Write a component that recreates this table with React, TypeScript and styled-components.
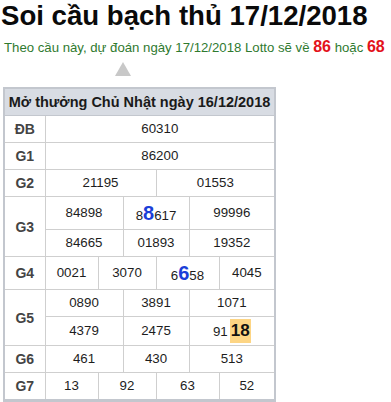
import React from "react";
import styled, { createGlobalStyle } from "styled-components";

const GlobalStyle = createGlobalStyle`
  body {
    margin: 0;
    background: #fff;
    font-family: "Liberation Sans", Arial, sans-serif;
  }
`;

const Page = styled.div`
  width: 391px;
  height: 402px;
  overflow: hidden;
`;

const Title = styled.h1`
  margin: 0;
  padding-left: 1px;
  font-size: 27.6px;
  font-weight: bold;
  color: #0a0a0a;
  line-height: 31px;
`;

const Lead = styled.p`
  margin: 6px 0 0;
  padding-left: 4px;
  font-size: 13.2px;
  color: #2f7a2f;
  line-height: 19px;
`;

const Lucky = styled.b`
  color: #e3121b;
  font-size: 16px;
`;

const Arrow = styled.div`
  width: 0;
  height: 0;
  margin: 5px 0 0 115px;
  border-left: 8px solid transparent;
  border-right: 8px solid transparent;
  border-bottom: 14px solid #c8c8c8;
`;

const Board = styled.table`
  margin: 11px 0 0 3px;
  width: 271px;
  table-layout: fixed;
  border-collapse: collapse;
  border: 2px solid #c3c7ce;
  border-bottom-width: 3px;
  font-size: 13.3px;
  color: #1d1d1d;
`;

const Col = styled.col<{ $w: number }>`
  width: ${(p) => p.$w}px;
`;

const Head = styled.th`
  background: #d8dce3;
  border: 1px solid #c3c7ce;
  height: 26px;
  padding: 0;
  font-size: 14.5px;
  font-weight: bold;
  color: #1a1a1a;
  line-height: 16px;
  white-space: nowrap;
`;

const Label = styled.td`
  border: 1px solid #cfcfcf;
  height: 26px;
  padding: 0;
  text-align: center;
  font-size: 14px;
  font-weight: bold;
  color: #444;
  line-height: 16px;
`;

const Cell = styled.td`
  border: 1px solid #cfcfcf;
  height: 26px;
  padding: 0;
  text-align: center;
  line-height: 16px;
`;

const Hit = styled.b`
  display: inline-block;
  color: #1b3fd8;
  font-size: 20px;
  line-height: 32px;
`;

const Mark = styled.b`
  display: inline-block;
  margin: 2px 0 2px 2px;
  padding: 2px 1px;
  background: #fdd584;
  color: #111;
  font-size: 17px;
  line-height: 20px;
`;

const spans: Record<number, number[]> = {
  1: [6],
  2: [3, 3],
  3: [2, 2, 2],
  4: [1, 2, 2, 1],
};

const widths = [41, 53, 25, 33, 33, 30, 56];

type Value = React.ReactNode;

const NumRow = ({ label, values, rows }: { label?: string; values: Value[]; rows?: number }) => (
  <tr>
    {label && <Label rowSpan={rows}>{label}</Label>}
    {values.map((v, i) => (
      <Cell key={i} colSpan={spans[values.length][i]}>
        {v}
      </Cell>
    ))}
  </tr>
);

export default function App() {
  return (
    <Page>
      <GlobalStyle />
      <Title>Soi cầu bạch thủ 17/12/2018</Title>
      <Lead>
        Theo cầu này, dự đoán ngày 17/12/2018 Lotto sẽ về <Lucky>86</Lucky> hoặc{" "}
        <Lucky>68</Lucky>
      </Lead>
      <Arrow />
      <Board>
        <colgroup>
          {widths.map((w, i) => (
            <Col key={i} $w={w} />
          ))}
        </colgroup>
        <thead>
          <tr>
            <Head colSpan={7}>Mở thưởng Chủ Nhật ngày 16/12/2018</Head>
          </tr>
        </thead>
        <tbody>
          <NumRow label="ĐB" values={["60310"]} />
          <NumRow label="G1" values={["86200"]} />
          <NumRow label="G2" values={["21195", "01553"]} />
          <NumRow
            label="G3"
            rows={2}
            values={[
              "84898",
              <>
                8<Hit>8</Hit>617
              </>,
              "99996",
            ]}
          />
          <NumRow values={["84665", "01893", "19352"]} />
          <NumRow
            label="G4"
            values={[
              "0021",
              "3070",
              <>
                6<Hit>6</Hit>58
              </>,
              "4045",
            ]}
          />
          <NumRow label="G5" rows={2} values={["0890", "3891", "1071"]} />
          <NumRow
            values={[
              "4379",
              "2475",
              <>
                91<Mark>18</Mark>
              </>,
            ]}
          />
          <NumRow label="G6" values={["461", "430", "513"]} />
          <NumRow label="G7" values={["13", "92", "63", "52"]} />
        </tbody>
      </Board>
    </Page>
  );
}
